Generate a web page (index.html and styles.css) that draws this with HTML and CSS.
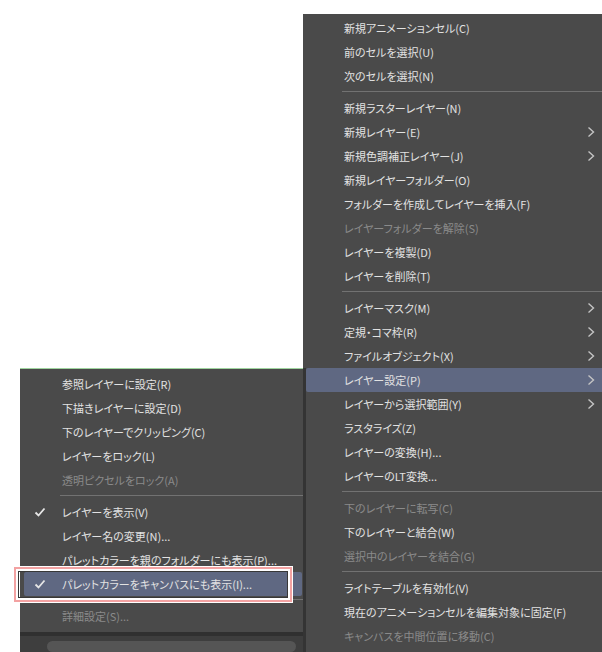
FILE: index.html
```html
<!DOCTYPE html>
<html lang="ja">
<head>
    <meta charset="UTF-8">
    <meta name="viewport" content="width=device-width, initial-scale=1.0">
    <title>Layer menu</title>
    <link rel="stylesheet" href="styles.css">
</head>
<body>
    <div class="menu" id="main-menu">
        <div class="item">新規アニメーションセル(C)</div>
        <div class="item">前のセルを選択(U)</div>
        <div class="item">次のセルを選択(N)</div>
        <div class="sep"></div>
        <div class="item">新規ラスターレイヤー(N)</div>
        <div class="item sub">新規レイヤー(E)</div>
        <div class="item sub">新規色調補正レイヤー(J)</div>
        <div class="item">新規レイヤーフォルダー(O)</div>
        <div class="item">フォルダーを作成してレイヤーを挿入(F)</div>
        <div class="item off">レイヤーフォルダーを解除(S)</div>
        <div class="item">レイヤーを複製(D)</div>
        <div class="item">レイヤーを削除(T)</div>
        <div class="sep"></div>
        <div class="item sub">レイヤーマスク(M)</div>
        <div class="item sub">定規・コマ枠(R)</div>
        <div class="item sub">ファイルオブジェクト(X)</div>
        <div class="item sub active">レイヤー設定(P)</div>
        <div class="item sub">レイヤーから選択範囲(Y)</div>
        <div class="item">ラスタライズ(Z)</div>
        <div class="item">レイヤーの変換(H)...</div>
        <div class="item">レイヤーのLT変換...</div>
        <div class="sep"></div>
        <div class="item off">下のレイヤーに転写(C)</div>
        <div class="item">下のレイヤーと結合(W)</div>
        <div class="item off">選択中のレイヤーを結合(G)</div>
        <div class="sep"></div>
        <div class="item">ライトテーブルを有効化(V)</div>
        <div class="item">現在のアニメーションセルを編集対象に固定(F)</div>
        <div class="item off">キャンバスを中間位置に移動(C)</div>
    </div>

    <div class="panel">
        <div class="menu" id="sub-menu">
            <div class="item">参照レイヤーに設定(R)</div>
            <div class="item">下描きレイヤーに設定(D)</div>
            <div class="item">下のレイヤーでクリッピング(C)</div>
            <div class="item">レイヤーをロック(L)</div>
            <div class="item off">透明ピクセルをロック(A)</div>
            <div class="sep"></div>
            <div class="item checked">レイヤーを表示(V)</div>
            <div class="item">レイヤー名の変更(N)...</div>
            <div class="item">パレットカラーを親のフォルダーにも表示(P)...</div>
            <div class="item checked active">パレットカラーをキャンバスにも表示(I)...</div>
            <div class="sep"></div>
            <div class="item off">詳細設定(S)...</div>
        </div>
        <div class="scroll"><div class="thumb"></div></div>
    </div>

    <div class="mark"></div>

    <script>
        // chevrons and check marks are drawn once for every item that needs one
        var arrow = '<svg class="arrow" width="8" height="12" viewBox="0 0 8 12"><polyline points="1.5,1.5 6.5,6 1.5,10.5" fill="none" stroke="#c4c4c4" stroke-width="1.4"/></svg>';
        var check = '<svg class="check" width="12" height="10" viewBox="0 0 12 10"><polyline points="1.5,5.5 4.5,8.5 10.5,1.5" fill="none" stroke="#e6e6e6" stroke-width="1.8"/></svg>';

        document.querySelectorAll(".item.sub").forEach(function (el) {
            el.insertAdjacentHTML("beforeend", arrow);
        });
        document.querySelectorAll(".item.checked").forEach(function (el) {
            el.insertAdjacentHTML("afterbegin", check);
        });
    </script>
</body>
</html>
```

FILE: styles.css
```css
* {
    margin: 0;
    padding: 0;
    box-sizing: border-box;
}

body {
    width: 602px;
    height: 652px;
    overflow: hidden;
    background-color: white;
    font-family: "Noto Sans CJK JP", "Noto Sans", sans-serif;
    font-size: 11px;
    font-feature-settings: "palt";
    color: #e2e2e2;
}

.menu {
    background-color: #4a4a4a;
}
#main-menu {
    position: absolute;
    left: 303px;
    top: 14px;
    width: 304px;
    height: 650px;
    padding-top: 2px;
}
#main-menu .item {
    margin-left: 3px;
    padding-left: 38px;
}
#main-menu .sep {
    margin-left: 39px;
}

.item {
    position: relative;
    height: 24px;
    line-height: 24px;
    white-space: nowrap;
}
.item.off {
    color: #8a8a8a;
}
.item.active {
    background-color: #5f6882;
    border-radius: 2px;
}
.sep {
    height: 8px;
    position: relative;
}
.sep::after {
    content: "";
    position: absolute;
    left: 0;
    right: 0;
    top: 3px;
    height: 1px;
    background-color: #727272;
}
.arrow {
    position: absolute;
    right: 12px;
    top: 6px;
}
.check {
    position: absolute;
    left: 8px;
    top: 7px;
}

.panel {
    position: absolute;
    left: 20px;
    top: 368px;
    width: 286px;
    height: 290px;
    background-color: #3e3e3e;
    border-right: 3px solid #343434;
}
#sub-menu {
    border-top: 1px solid #9fd49f;
    padding: 3px 0 4px;
    border-bottom: 4px solid #303030;
}
#sub-menu .item {
    margin: 0 1px 0 4px;
    padding-left: 38px;
}
#sub-menu .check {
    left: 10px;
}
#sub-menu .sep {
    margin-left: 40px;
}
.scroll {
    padding: 5px 7px 0 27px;
}
.thumb {
    height: 11px;
    border-radius: 6px;
    background-color: #555555;
}

.mark {
    position: absolute;
    left: 14px;
    top: 567px;
    width: 278px;
    height: 35px;
    border: 2px solid #f3a2a2;
    box-shadow: 0 0 0 1px white, inset 0 0 0 2px white, inset 0 0 0 3px #383838;
}
```
